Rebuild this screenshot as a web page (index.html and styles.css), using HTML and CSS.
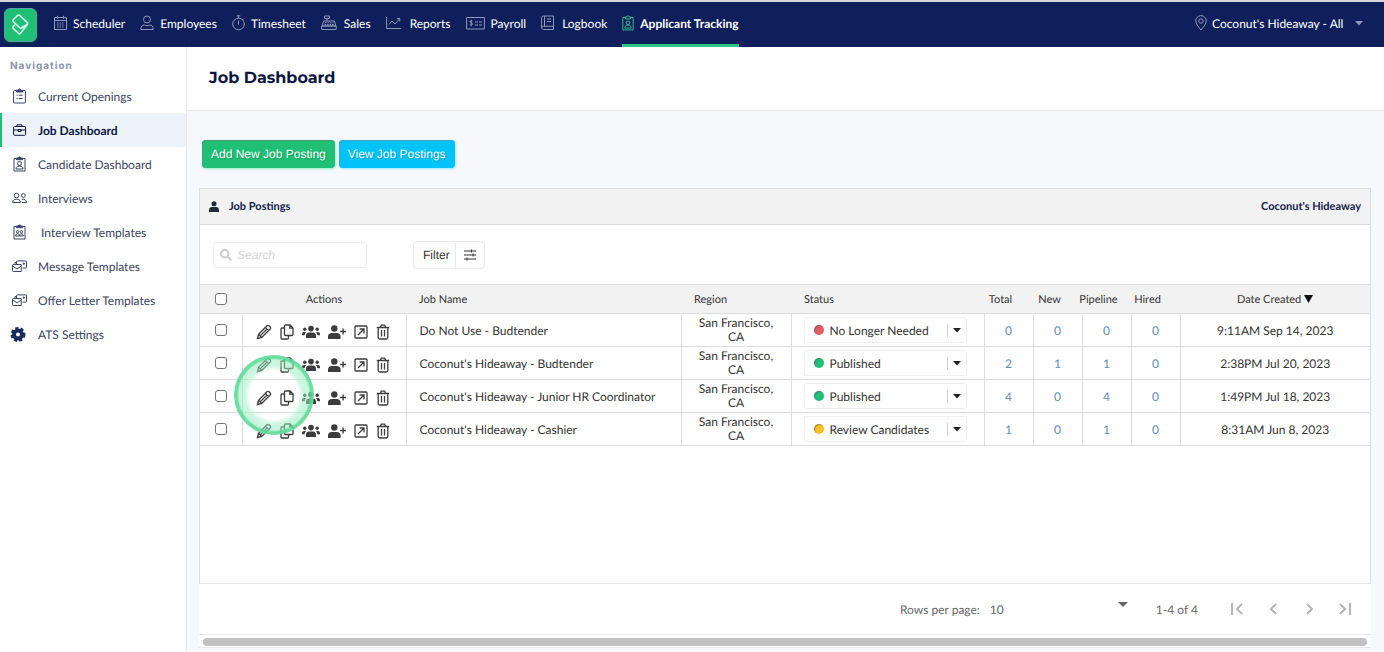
FILE: index.html
```html
<!DOCTYPE html>
<html lang="en">
<head>
    <meta charset="UTF-8">
    <meta name="viewport" content="width=device-width, initial-scale=1.0">
    <title>Job Dashboard</title>
    <link rel="stylesheet" href="styles.css">
</head>
<body>
    <svg class="sprite" aria-hidden="true">
        <symbol id="i-pencil" viewBox="0 0 16 16"><path d="M1.5 14.5l1-4.2L11 1.8a1.4 1.4 0 0 1 2 0l1.2 1.2a1.4 1.4 0 0 1 0 2L5.7 13.5zM2.5 10.3l3.2 3.2M9.4 3.4l3.2 3.2M4.6 11.4l6.2-6.2"/></symbol>
        <symbol id="i-copy" viewBox="0 0 14 16"><path d="M5.5 1h4.6L13 3.900V10.500a1 1 0 0 1-1 1H5.500a1 1 0 0 1-1-1V2a1 1 0 0 1 1-1zM9.800 1v3.200H13M4.500 4H2a1 1 0 0 0-1 1v9a1 1 0 0 0 1 1h5.500a1 1 0 0 0 1-1v-2.500"/></symbol>
        <symbol id="i-users" viewBox="0 0 18 14"><circle cx="9" cy="3.600" r="2.800"/><circle cx="2.800" cy="4.200" r="1.700"/><circle cx="15.200" cy="4.200" r="1.700"/><path d="M4 13v-2.400c0-2 1.400-3.200 3-3.200h4c1.600 0 3 1.200 3 3.200V13zM0 10.200V9c0-1.300.9-2 2-2h2.300c-.9.700-1.500 1.800-1.600 3.200zM18 10.200V9c0-1.300-.9-2-2-2h-2.300c.9.700 1.500 1.800 1.600 3.200z"/></symbol>
        <symbol id="i-user-plus" viewBox="0 0 18 14"><circle cx="6.300" cy="3.500" r="3.200"/><path d="M0 14v-2.400C0 9.300 1.600 8 3.700 8h5.200c2.100 0 3.700 1.300 3.700 3.600V14zM14.400 3.500h1.400v2.300H18v1.400h-2.200v2.300h-1.400V7.200h-2.200V5.800h2.200z"/></symbol>
        <symbol id="i-open" viewBox="0 0 14 14"><rect x="1" y="1" width="12" height="12" rx="1"/><path d="M4 10l5.800-5.800M5.600 4H10v4.400"/></symbol>
        <symbol id="i-trash" viewBox="0 0 14 16"><path d="M.8 3.500h12.400M4.300 3.500l1-2.300h3.400l1 2.300M2.200 3.500V13.500a1.500 1.500 0 0 0 1.500 1.500h6.600a1.500 1.500 0 0 0 1.500-1.500V3.500M5.500 6v6.500M8.500 6v6.500"/></symbol>
        <symbol id="i-caret" viewBox="0 0 8 5"><path d="M0 0h8L4 4.500z"/></symbol>
        <symbol id="i-mails" viewBox="0 0 15 13"><path d="M4.500 4V1.700a.8.8 0 0 1 .8-.8h8.400a.8.8 0 0 1 .8.8v5.600a.8.8 0 0 1-.8.8H10.500M11.300 3h1v1.300h-1zM3 4V2.500h1.500M1.300 4.500h7.900v7H1.300a.8.800 0 0 1-.8-.8V5.300a.8.800 0 0 1 .8-.8zM.8 6l4.200 3 4.200-3"/></symbol>
    </svg>

    <header class="topbar">
        <a href="#" class="logo" aria-label="Home">
            <svg width="20" height="24" viewBox="0 0 20 24"><path d="M6.800 2.300L2.200 6.800a1.200 1.200 0 0 0 0 1.700L9.500 15.500l6.800-4.200a1.200 1.200 0 0 0 .2-1.700L8.500 2.300a1.200 1.200 0 0 0-1.700 0zM16.600 11.200L9.300 20.500a1.200 1.200 0 0 1-1.700 0L2.200 15.300a1.200 1.200 0 0 1 0-1.700L4 11.800"/></svg>
        </a>
        <nav class="main-nav">
            <a href="#"><svg width="13" height="16" viewBox="0 0 13 16"><path d="M.5 2.500h12v12H.5zM.5 5.500h12M3.500.8v3M9.500.8v3"/><path d="M3 8h7.500M3 10h7.500M3 12h7.500" stroke-dasharray="1.500 1"/></svg>Scheduler</a>
            <a href="#"><svg width="14" height="16" viewBox="0 0 14 16"><circle cx="7" cy="4.500" r="3.500"/><path d="M.8 14.500c0-3 1.400-4.500 3.600-4.500 1.600.9 3.600.9 5.200 0 2.200 0 3.600 1.500 3.600 4.500z"/></svg>Employees</a>
            <a href="#"><svg width="13" height="16" viewBox="0 0 13 16"><circle cx="6.500" cy="9" r="5.800"/><path d="M6.500 5.500v4M4.800.8h3.400M6.500.8v2.400M10.600 4.800l1.200-1.200"/></svg>Timesheet</a>
            <a href="#"><svg width="17" height="16" viewBox="0 0 17 16"><path d="M2.500 6h11l1.200 5H1.300zM.6 11h14.600v3.500H.6zM3.500 1h5v2.500h-5zM6 3.500V6"/><path d="M4 7.800h8.500M3.600 9.500h9" stroke-dasharray="1.500 1"/></svg>Sales</a>
            <a href="#"><svg width="18" height="16" viewBox="0 0 18 16"><path d="M.6 2v11.500h14.200M3 9.500L6 6l3 3 4.500-5M10.800 3.500h3v3"/></svg>Reports</a>
            <a href="#"><svg width="19" height="16" viewBox="0 0 19 16"><path d="M.6 2.500h17.800v11.500H.6zM9 7h3M13 7h3M9 10h3M13 10h3M6.500 6c-1-.8-2.500-.4-2.500.7 0 1.500 2.500.8 2.500 2.200 0 1.200-1.600 1.500-2.600.7M5.200 4.800v6.500"/></svg>Payroll</a>
            <a href="#"><svg width="15" height="16" viewBox="0 0 15 16"><path d="M2.500 1h10v13.500h-10c-1.200 0-1.900-.7-1.900-1.700V2.800C.6 1.700 1.300 1 2.500 1zM.6 12.800c0-.9.7-1.500 1.900-1.500h10M3.500 1v10.300M6 4h4M6 6.500h4"/></svg>Logbook</a>
            <a href="#" class="active"><svg width="12" height="16" viewBox="0 0 12 16"><path d="M3.500 2.500H.8v12.400h10.400V2.500H8.500M3.500 4V1.800h1.300c.2-1.400 2.200-1.400 2.400 0h1.300V4zM2.800 13c0-2 1-2.800 3.200-2.800S9.200 11 9.200 13z"/><circle cx="6" cy="7.800" r="1.800"/></svg>Applicant Tracking</a>
        </nav>
        <label class="location">
            <svg width="12" height="16" viewBox="0 0 12 16"><path d="M6 15C3 11.200.7 8.500.7 5.900a5.300 5.300 0 0 1 10.600 0C11.300 8.500 9 11.200 6 15z"/><circle cx="6" cy="6" r="2.200"/></svg>
            <select aria-label="Location"><option>Coconut's Hideaway - All</option></select>
            <svg class="caret" width="8" height="5"><use href="#i-caret"/></svg>
        </label>
    </header>

    <div class="layout">
        <aside class="sidebar">
            <h2>Navigation</h2>
            <a href="#"><svg width="15" height="16" viewBox="0 0 15 16"><path d="M4.500 2.500H2.400a.8.800 0 0 0-.8.8V14.200a.8.800 0 0 0 .8.800h10.200a.8.800 0 0 0 .8-.8V3.300a.8.800 0 0 0-.8-.8H10.500M4.500 7.200h1M6.700 7.200h4M4.500 10.500h1M6.700 10.500h4"/><path class="solid" d="M4.500 4V2.200h1.700c.2-1.600 2.400-1.600 2.600 0h1.700V4z"/></svg>Current Openings</a>
            <a href="#" class="active"><svg width="15" height="16" viewBox="0 0 15 16"><rect x="1.600" y="4.500" width="12" height="8.800" rx="1"/><path d="M5 4.500V2.800h5v1.700M1.600 8h4.600M9 8h4.600M6.200 7.500h2.800v2H6.200z"/></svg>Job Dashboard</a>
            <a href="#"><svg width="15" height="16" viewBox="0 0 15 16"><path d="M4.500 2.500H2v12.500h11V2.500h-2.500M4 13c0-2 1.200-2.800 3.500-2.800S11 11 11 13z"/><circle cx="7.500" cy="7.500" r="2"/><path class="solid" d="M4.500 3.700V2h1.700c.2-1.500 2.400-1.500 2.600 0h1.700v1.700z"/></svg>Candidate Dashboard</a>
            <a href="#"><svg width="15" height="16" viewBox="0 0 15 16"><circle cx="4.500" cy="5.500" r="2.300"/><circle cx="11.300" cy="5.500" r="1.900"/><path d="M.6 12.500c0-2.300 1.300-3.300 3.900-3.300s3.900 1 3.900 3.300zM9.800 9.300c2.900-.3 4.600.6 4.600 3.200H10"/></svg>Interviews</a>
            <a href="#"><svg width="15" height="16" viewBox="0 0 15 16"><path d="M4.500 2.500H2v12.500h11V2.500h-2.500M3.700 12c0-1.600.6-2.200 1.900-2.200s1.800.6 1.800 2.200zM7.700 12c0-1.600.6-2.200 1.800-2.200s1.900.6 1.900 2.200z"/><circle cx="5.600" cy="7.800" r="1.200"/><circle cx="9.500" cy="7.800" r="1.200"/><path class="solid" d="M4.500 3.700V2h1.700c.2-1.500 2.400-1.500 2.600 0h1.700v1.700z"/></svg><span>&nbsp;Interview Templates</span></a>
            <a href="#"><svg width="15" height="13"><use href="#i-mails"/></svg>Message Templates</a>
            <a href="#"><svg width="15" height="13"><use href="#i-mails"/></svg>Offer Letter Templates</a>
            <a href="#"><svg class="gear" width="15" height="15" viewBox="0 0 15 15"><circle class="teeth" cx="6" cy="7.500" r="6"/><circle class="wheel" cx="6" cy="7.500" r="4"/></svg>ATS Settings</a>
        </aside>

        <main class="main">
            <div class="page-title">
                <h1>Job Dashboard</h1>
            </div>
            <div class="content">
                <div class="page-actions">
                    <button type="button" class="btn btn-green">Add New Job Posting</button>
                    <button type="button" class="btn btn-blue">View Job Postings</button>
                </div>

                <section class="panel">
                    <div class="panel-header">
                        <svg width="10" height="11" viewBox="0 0 10 11"><circle cx="5" cy="2.800" r="2.500"/><path d="M0 11V9c0-1.800 1.200-2.900 2.900-2.900h4.200C8.800 6.100 10 7.200 10 9v2z"/></svg>
                        <h2>Job Postings</h2>
                        <strong>Coconut's Hideaway</strong>
                    </div>
                    <div class="toolbar">
                        <label class="search">
                            <svg width="12" height="12" viewBox="0 0 12 12"><circle cx="4.800" cy="4.800" r="3.700"/><path d="M7.600 7.600l3.600 3.600"/></svg>
                            <input type="text" placeholder="Search" aria-label="Search">
                        </label>
                        <div class="filter">
                            <button type="button">Filter</button>
                            <button type="button" aria-label="Filter options"><svg width="12" height="12" viewBox="0 0 12 12"><path d="M0 2h12M0 6h12M0 10h12M7.500.5v3M9 4.500v3M3 8.500v3"/></svg></button>
                        </div>
                    </div>
                    <div class="table-area">
                        <table class="jobs">
                            <colgroup>
                                <col class="col-check"><col class="col-actions"><col><col class="col-region"><col class="col-status">
                                <col class="col-count"><col class="col-count"><col class="col-count"><col class="col-count"><col class="col-date">
                            </colgroup>
                            <thead>
                                <tr>
                                    <th><input type="checkbox" aria-label="Select all"></th>
                                    <th>Actions</th>
                                    <th class="left">Job Name</th>
                                    <th class="left">Region</th>
                                    <th class="left">Status</th>
                                    <th><span>Total</span></th>
                                    <th><span>New</span></th>
                                    <th><span>Pipeline</span></th>
                                    <th><span>Hired</span></th>
                                    <th>Date Created <svg width="9" height="8" viewBox="0 0 9 8"><path d="M0 0h9L4.500 8z"/></svg></th>
                                </tr>
                            </thead>
                            <tbody>
                                <tr>
                                    <td><input type="checkbox" aria-label="Select row"></td>
                                    <td><div class="actions">
                                        <button type="button" aria-label="Edit"><svg width="16" height="16"><use href="#i-pencil"/></svg></button>
                                        <button type="button" aria-label="Copy"><svg width="14" height="16"><use href="#i-copy"/></svg></button>
                                        <button type="button" class="fill" aria-label="Applicants"><svg width="18" height="14"><use href="#i-users"/></svg></button>
                                        <button type="button" class="fill" aria-label="Add applicant"><svg width="18" height="14"><use href="#i-user-plus"/></svg></button>
                                        <button type="button" aria-label="Open"><svg width="14" height="14"><use href="#i-open"/></svg></button>
                                        <button type="button" aria-label="Delete"><svg width="14" height="16"><use href="#i-trash"/></svg></button>
                                    </div></td>
                                    <td class="left">Do Not Use - Budtender</td>
                                    <td class="region">San Francisco, CA</td>
                                    <td><label class="status red"><i></i><select aria-label="Status"><option>No Longer Needed</option></select><span><svg width="8" height="5"><use href="#i-caret"/></svg></span></label></td>
                                    <td><a href="#">0</a></td>
                                    <td><a href="#">0</a></td>
                                    <td><a href="#">0</a></td>
                                    <td><a href="#">0</a></td>
                                    <td>9:11AM Sep 14, 2023</td>
                                </tr>
                                <tr>
                                    <td><input type="checkbox" aria-label="Select row"></td>
                                    <td><div class="actions">
                                        <button type="button" aria-label="Edit"><svg width="16" height="16"><use href="#i-pencil"/></svg></button>
                                        <button type="button" aria-label="Copy"><svg width="14" height="16"><use href="#i-copy"/></svg></button>
                                        <button type="button" class="fill" aria-label="Applicants"><svg width="18" height="14"><use href="#i-users"/></svg></button>
                                        <button type="button" class="fill" aria-label="Add applicant"><svg width="18" height="14"><use href="#i-user-plus"/></svg></button>
                                        <button type="button" aria-label="Open"><svg width="14" height="14"><use href="#i-open"/></svg></button>
                                        <button type="button" aria-label="Delete"><svg width="14" height="16"><use href="#i-trash"/></svg></button>
                                    </div></td>
                                    <td class="left">Coconut's Hideaway - Budtender</td>
                                    <td class="region">San Francisco, CA</td>
                                    <td><label class="status green"><i></i><select aria-label="Status"><option>Published</option></select><span><svg width="8" height="5"><use href="#i-caret"/></svg></span></label></td>
                                    <td><a href="#">2</a></td>
                                    <td><a href="#">1</a></td>
                                    <td><a href="#">1</a></td>
                                    <td><a href="#">0</a></td>
                                    <td>2:38PM Jul 20, 2023</td>
                                </tr>
                                <tr>
                                    <td><input type="checkbox" aria-label="Select row"></td>
                                    <td><div class="actions">
                                        <button type="button" aria-label="Edit"><svg width="16" height="16"><use href="#i-pencil"/></svg></button>
                                        <button type="button" aria-label="Copy"><svg width="14" height="16"><use href="#i-copy"/></svg></button>
                                        <button type="button" class="fill" aria-label="Applicants"><svg width="18" height="14"><use href="#i-users"/></svg></button>
                                        <button type="button" class="fill" aria-label="Add applicant"><svg width="18" height="14"><use href="#i-user-plus"/></svg></button>
                                        <button type="button" aria-label="Open"><svg width="14" height="14"><use href="#i-open"/></svg></button>
                                        <button type="button" aria-label="Delete"><svg width="14" height="16"><use href="#i-trash"/></svg></button>
                                    </div></td>
                                    <td class="left">Coconut's Hideaway - Junior HR Coordinator</td>
                                    <td class="region">San Francisco, CA</td>
                                    <td><label class="status green"><i></i><select aria-label="Status"><option>Published</option></select><span><svg width="8" height="5"><use href="#i-caret"/></svg></span></label></td>
                                    <td><a href="#">4</a></td>
                                    <td><a href="#">0</a></td>
                                    <td><a href="#">4</a></td>
                                    <td><a href="#">0</a></td>
                                    <td>1:49PM Jul 18, 2023</td>
                                </tr>
                                <tr>
                                    <td><input type="checkbox" aria-label="Select row"></td>
                                    <td><div class="actions">
                                        <button type="button" aria-label="Edit"><svg width="16" height="16"><use href="#i-pencil"/></svg></button>
                                        <button type="button" aria-label="Copy"><svg width="14" height="16"><use href="#i-copy"/></svg></button>
                                        <button type="button" class="fill" aria-label="Applicants"><svg width="18" height="14"><use href="#i-users"/></svg></button>
                                        <button type="button" class="fill" aria-label="Add applicant"><svg width="18" height="14"><use href="#i-user-plus"/></svg></button>
                                        <button type="button" aria-label="Open"><svg width="14" height="14"><use href="#i-open"/></svg></button>
                                        <button type="button" aria-label="Delete"><svg width="14" height="16"><use href="#i-trash"/></svg></button>
                                    </div></td>
                                    <td class="left">Coconut's Hideaway - Cashier</td>
                                    <td class="region">San Francisco, CA</td>
                                    <td><label class="status yellow"><i></i><select aria-label="Status"><option>Review Candidates</option></select><span><svg width="8" height="5"><use href="#i-caret"/></svg></span></label></td>
                                    <td><a href="#">1</a></td>
                                    <td><a href="#">0</a></td>
                                    <td><a href="#">1</a></td>
                                    <td><a href="#">0</a></td>
                                    <td>8:31AM Jun 8, 2023</td>
                                </tr>
                            </tbody>
                        </table>
                        <div class="click-ring"></div>
                    </div>
                </section>

                <div class="pagination">
                    <label for="rows">Rows per page:</label>
                    <div class="rows-select">
                        <select id="rows"><option>10</option></select>
                        <svg width="10" height="5" viewBox="0 0 10 5"><path d="M0 0h10L5 5z"/></svg>
                    </div>
                    <span class="range">1-4 of 4</span>
                    <div class="pager">
                        <button type="button" aria-label="First page"><svg width="14" height="12" viewBox="0 0 14 12"><path d="M2 0v12M12 1L7 6l5 5"/></svg></button>
                        <button type="button" aria-label="Previous page"><svg width="14" height="12" viewBox="0 0 14 12"><path d="M10 1L5 6l5 5"/></svg></button>
                        <button type="button" aria-label="Next page"><svg width="14" height="12" viewBox="0 0 14 12"><path d="M5 1l5 5-5 5"/></svg></button>
                        <button type="button" aria-label="Last page"><svg width="14" height="12" viewBox="0 0 14 12"><path d="M2 1l5 5-5 5M12 0v12"/></svg></button>
                    </div>
                </div>
                <div class="scroll-track"><div class="scroll-thumb"></div></div>
            </div>
        </main>
    </div>
</body>
</html>
```
FILE: styles.css
```css
* {
    margin: 0;
    padding: 0;
    box-sizing: border-box;
}

body {
    display: flex;
    flex-direction: column;
    min-height: 100vh;
    font-family: Lato, "Liberation Sans", sans-serif;
    font-size: 12px;
    text-rendering: geometricPrecision;
    color: #333;
    background: #f7f8fc;
}

a {
    color: inherit;
    text-decoration: none;
}

button,
select,
input {
    font: inherit;
    color: inherit;
    text-rendering: inherit;
}

button {
    cursor: pointer;
    background: none;
    border: none;
}

select {
    appearance: none;
    background: none;
    border: none;
    outline: none;
}

svg {
    display: block;
    flex-shrink: 0;
    overflow: visible;
    fill: none;
    stroke: currentColor;
}

.sprite {
    position: absolute;
    width: 0;
    height: 0;
}

/* Top bar */
.topbar {
    display: flex;
    align-items: center;
    height: 47px;
    padding: 0 21px 0 4px;
    background: #0f1f5b;
    border-top: 2px solid #d6d6da;
    color: white;
}

.logo {
    display: flex;
    align-items: center;
    justify-content: center;
    width: 33px;
    height: 34px;
    margin-right: 17px;
    border: 1px solid #5b9fa0;
    border-radius: 6px;
    background: #1fbf75;
    box-shadow: 1px 1px 2px #063c3f;
}

.logo svg {
    stroke: #d8ffec;
    stroke-width: 1.6;
    stroke-linejoin: round;
}

.main-nav {
    display: flex;
    gap: 15px;
    align-self: stretch;
}

.main-nav a {
    display: flex;
    align-items: center;
    gap: 6px;
    border-bottom: 3px solid transparent;
}

.main-nav svg,
.location svg {
    color: #8f98bd;
}

.main-nav a.active {
    font-weight: bold;
    border-bottom-color: #2fc483;
}

.main-nav .active svg {
    color: #35b98a;
}

.location {
    display: flex;
    align-items: center;
    gap: 5px;
    margin-left: auto;
    padding-bottom: 3px;
}

.location .caret {
    margin-left: 6px;
}

/* Page frame */
.layout {
    display: flex;
    flex: 1;
}

.sidebar {
    width: 187px;
    flex-shrink: 0;
    background: white;
    border-right: 1px solid #e6e8ee;
}

.sidebar h2 {
    padding: 11px 0 5px 10px;
    font-family: Inter, sans-serif;
    font-size: 10px;
    line-height: 16px;
    letter-spacing: 1px;
    color: #8c93a8;
}

.sidebar a {
    display: flex;
    align-items: center;
    gap: 11px;
    height: 34px;
    padding-left: 10px;
    border-left: 2px solid transparent;
    color: #3b4460;
}

.sidebar a.active {
    background: #ecf3fb;
    border-left-color: #1fbf75;
    color: #0b1741;
    font-weight: bold;
}

.sidebar .solid {
    fill: currentColor;
}

.gear {
    color: #1c2b5c;
}

.gear .teeth {
    stroke-width: 3;
    stroke-dasharray: 3 2;
}

.gear .wheel {
    stroke-width: 4;
}

.main {
    display: flex;
    flex-direction: column;
    flex: 1;
    min-width: 0;
}

.page-title {
    height: 64px;
    padding: 21px 22px;
    background: white;
    border-bottom: 1px solid #e6e8ee;
}

.page-title h1 {
    font-family: Montserrat, Inter, sans-serif;
    font-size: 16px;
    line-height: 22px;
    color: #0b1741;
}

.content {
    display: flex;
    flex-direction: column;
    flex: 1;
    padding: 29px 13px 4px 12px;
}

.page-actions {
    display: flex;
    gap: 4px;
    padding: 0 3px;
    margin-bottom: 20px;
}

.btn {
    height: 28px;
    padding: 0 9px;
    border-radius: 4px;
    font-family: "Liberation Sans", Arial, sans-serif;
    font-size: 12px;
    color: white;
    text-shadow: 1px 1px 1px rgba(0, 0, 0, 0.2);
}

.btn-green {
    background: #1fbf75;
    box-shadow: 1px 1px 3px #8ff0c4, inset 1px 1px 1px #4d9e7c;
}

.btn-blue {
    background: #00c3fa;
    box-shadow: 1px 1px 3px #8fe9ff, inset 1px 1px 1px #4da2c0;
}

/* Job postings panel */
.panel {
    display: flex;
    flex-direction: column;
    flex: 1;
    background: white;
    border: 1px solid #ddd;
    border-bottom-color: #e8e8e8;
}

.panel-header {
    display: flex;
    align-items: center;
    height: 36px;
    padding: 0 9px;
    background: #f2f2f2;
    border-bottom: 1px solid #ddd;
    color: #15204d;
    font-size: 11px;
}

.panel-header svg {
    margin-right: 10px;
    fill: #222a3a;
    stroke: none;
}

.panel-header h2 {
    flex: 1;
    font-size: inherit;
}

.toolbar {
    display: flex;
    align-items: center;
    height: 59px;
    gap: 46px;
    padding: 0 13px;
}

.search {
    display: flex;
    align-items: center;
    gap: 5px;
    width: 154px;
    height: 26px;
    padding: 0 6px;
    border: 1px solid #ececec;
    border-radius: 3px;
    color: #ccc;
}

.search svg {
    stroke-width: 2;
}

.search input {
    width: 100%;
    border: none;
    outline: none;
    background: none;
    font-family: "Liberation Sans", Arial, sans-serif;
}

.search input::placeholder {
    color: #d4d4d4;
    font-style: italic;
}

.filter {
    display: flex;
    height: 28px;
    border: 1px solid #e9e9e9;
    border-radius: 4px;
    font-family: "Liberation Sans", Arial, sans-serif;
}

.filter button {
    display: flex;
    align-items: center;
    padding: 0 5px 0 9px;
}

.filter button + button {
    padding: 0 8px;
    border-left: 1px solid #e9e9e9;
}

.table-area {
    position: relative;
    flex: 1;
}

.jobs {
    width: 100%;
    table-layout: fixed;
    border-collapse: collapse;
    text-align: center;
}

.col-check { width: 42px; }
.col-actions { width: 164px; }
.col-region { width: 110px; }
.col-status { width: 193px; }
.col-count { width: 49px; }
.col-date { width: 190px; }

.jobs th {
    height: 29px;
    background: #f2f2f2;
    border-top: 1px solid #ddd;
    font-size: 11px;
    font-weight: normal;
    white-space: nowrap;
}

.jobs th span {
    margin-left: -16px;
}

.jobs th svg {
    display: inline-block;
    fill: #111;
    stroke: none;
}

.jobs td {
    height: 33px;
    border: 1px solid #ddd;
}

.jobs td:first-child {
    border-left: none;
}

.jobs td:last-child {
    border-right: none;
}

.jobs .left {
    padding-left: 13px;
    text-align: left;
}

.jobs .region {
    padding: 0 12px;
    line-height: 14px;
}

.jobs td a {
    color: #5f8db8;
}

.jobs input {
    appearance: none;
    display: block;
    width: 12px;
    height: 12px;
    margin: 0 auto;
    border: 1px solid #767676;
    border-radius: 3px;
    background: white;
}

.actions {
    display: flex;
    align-items: center;
    justify-content: space-between;
    padding: 4px 15px 0 13px;
    color: #3c3c3c;
}

.actions svg {
    stroke-width: 1.3;
}

.actions .fill svg {
    fill: currentColor;
    stroke: none;
}

.status {
    display: flex;
    align-items: center;
    height: 26px;
    margin: 0 17px 0 12px;
    padding: 0 5px 0 9px;
    border: 1px solid #efefef;
    border-radius: 3px;
}

.status i {
    width: 10px;
    height: 10px;
    margin-right: 6px;
    border-radius: 50%;
    background: currentColor;
    box-shadow: inset 1px 1px 1px rgba(90, 90, 90, 0.5);
}

.status select {
    flex: 1;
    min-width: 0;
    color: #333;
}

.status span {
    padding: 4px 0 4px 5px;
    border-left: 1px solid #ccc;
}

.status svg {
    fill: #222;
    stroke: none;
}

.red { color: #e55b62; }
.green { color: #1fbf75; }
.yellow { color: #fbbf24; }

.click-ring {
    position: absolute;
    top: 71px;
    left: 34px;
    width: 80px;
    height: 80px;
    border-radius: 50%;
    background: radial-gradient(circle closest-side, transparent 24px, rgba(160, 238, 195, 0.5) 29px, rgba(150, 236, 190, 0.55) 35px, rgba(85, 219, 150, 0.9) 37px, #74dba5 40px);
    pointer-events: none;
}

/* Pagination */
.pagination {
    display: flex;
    align-items: center;
    justify-content: flex-end;
    height: 50px;
    padding-right: 19px;
    background: white;
    color: #666;
}

.rows-select {
    display: flex;
    width: 138px;
    margin: 0 28px 0 10px;
}

.rows-select select {
    flex: 1;
}

.rows-select svg,
.location .caret {
    fill: currentColor;
    stroke: none;
}

.pager {
    display: flex;
    gap: 22px;
    margin-left: 32px;
    color: #b5b5b5;
}

.pager svg {
    stroke-width: 2;
}

.scroll-track {
    height: 14px;
    padding: 3px 4px 2px;
    background: white;
    border: 1px solid #e8e8e8;
    border-width: 1px 0;
}

.scroll-thumb {
    height: 8px;
    border-radius: 4px;
    background: #c1c1c1;
}
```
